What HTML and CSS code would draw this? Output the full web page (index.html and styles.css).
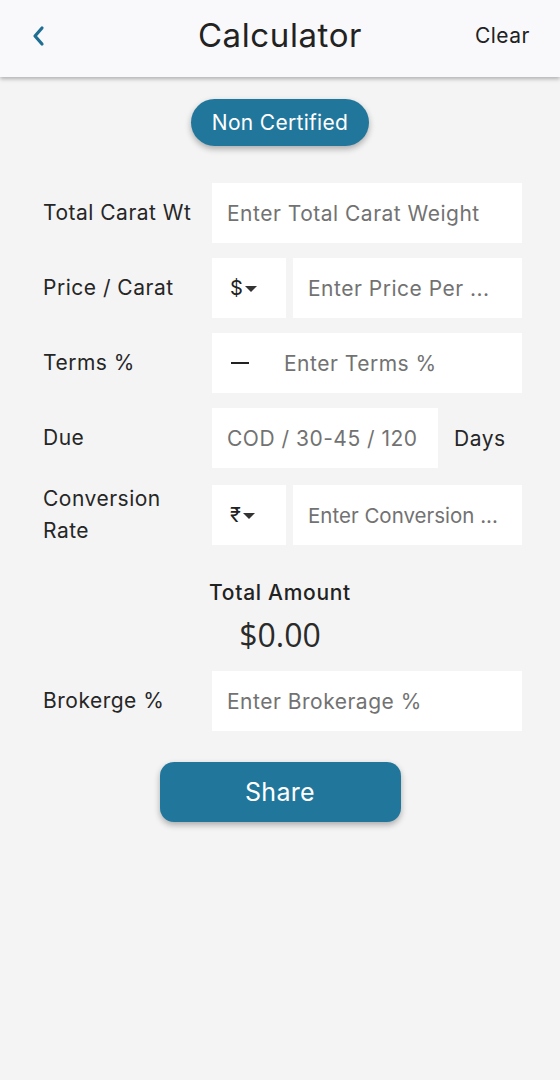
FILE: index.html
```html
<!DOCTYPE html>
<html lang="en">
<head>
<meta charset="utf-8">
<title>Calculator</title>
<link rel="stylesheet" href="styles.css">
</head>
<body>
<header class="appbar">
  <button class="back" aria-label="Back">
    <svg width="16" height="24" viewBox="0 0 16 24"><path d="M12 4 L5 12 L12 20" fill="none" stroke="#1f6f93" stroke-width="3.2" stroke-linecap="round" stroke-linejoin="round"/></svg>
  </button>
  <h1 class="title">Calculator</h1>
  <button class="clear">Clear</button>
</header>

<main class="content">
  <div class="pill-wrap"><button class="pill">Non Certified</button></div>

  <div class="form form-main">
    <div class="row">
      <label class="label">Total Carat Wt</label>
      <div class="field wide"><span class="ph">Enter Total Carat Weight</span></div>
    </div>

    <div class="row">
      <label class="label">Price / Carat</label>
      <div class="split">
        <div class="field select"><span class="cur">$</span><span class="caret"></span></div>
        <div class="field grow"><span class="ph">Enter Price Per ...</span></div>
      </div>
    </div>

    <div class="row">
      <label class="label">Terms %</label>
      <div class="field wide terms"><span class="minus"></span><span class="ph">Enter Terms %</span></div>
    </div>

    <div class="row">
      <label class="label">Due</label>
      <div class="split">
        <div class="field due"><span class="ph">COD / 30-45 / 120</span></div>
        <span class="days">Days</span>
      </div>
    </div>

    <div class="row conv">
      <label class="label two">Conversion<br>Rate</label>
      <div class="split">
        <div class="field select"><span class="cur">₹</span><span class="caret"></span></div>
        <div class="field grow"><span class="ph tight">Enter Conversion ...</span></div>
      </div>
    </div>
  </div>

  <div class="total">
    <div class="total-label">Total Amount</div>
    <div class="total-value">$0.00</div>
  </div>

  <div class="form">
    <div class="row">
      <label class="label">Brokerge %</label>
      <div class="field wide"><span class="ph">Enter Brokerage %</span></div>
    </div>
  </div>

  <div class="share-wrap"><button class="share">Share</button></div>
</main>
</body>
</html>
```

FILE: styles.css
```css
* { box-sizing: border-box; }
html, body { margin: 0; padding: 0; }
body {
  width: 560px;
  min-height: 1080px;
  background: #f4f4f4;
  font-family: "Inter", "Noto Sans", sans-serif;
  color: #262626;
}
button { font-family: inherit; border: 0; background: none; padding: 0; cursor: pointer; }

.appbar {
  height: 77px;
  background: #f9f9fb;
  box-shadow: 0 2px 4px rgba(0,0,0,0.28);
  display: grid;
  grid-template-columns: 1fr auto 1fr;
  align-items: center;
  padding: 0 30px 0 30px;
  position: relative;
}
.back { width: 20px; height: 30px; display: flex; align-items: center; margin-top: -6px; justify-self: start; }
.title {
  margin: -7px 0 0 0;
  font-size: 33px;
  font-weight: 400;
  color: #222;
  letter-spacing: 0.6px;
}
.clear { font-size: 21px; letter-spacing: 0.5px; color: #222; margin-top: -7px; justify-self: end; }

.content { padding-top: 22px; }
.pill-wrap { display: flex; justify-content: center; }
.pill {
  width: 178px; height: 47px;
  border-radius: 24px;
  background: #21769c;
  color: #fff;
  font-size: 21px;
  letter-spacing: 0.3px;
  box-shadow: 0 3px 6px rgba(0,0,0,0.3);
}

.form {
  padding: 0 38px 0 43px;
  display: flex;
  flex-direction: column;
  gap: 15px;
}
.form-main { margin-top: 37px; }
.row {
  display: grid;
  grid-template-columns: 169px 1fr;
  align-items: center;
  min-height: 60px;
}
.label { font-size: 21px; letter-spacing: 0.5px; color: #262626; line-height: 32px; }
.field {
  height: 60px;
  background: #fff;
  display: flex;
  align-items: center;
  padding: 0 15px;
  min-width: 0;
}
.ph { font-size: 21px; letter-spacing: 0.5px; color: #727272; white-space: nowrap; }
.ph.tight { letter-spacing: 0; font-size: 20.5px; }
.split { display: flex; align-items: center; gap: 7px; min-width: 0; }
.select { width: 74px; flex: none; padding: 0 0 0 18px; gap: 2px; }
.cur { font-size: 20px; color: #222; }
.caret {
  width: 0; height: 0;
  border-left: 6px solid transparent;
  border-right: 6px solid transparent;
  border-top: 6px solid #333;
  margin-top: 2px;
}
.grow { flex: 1; padding-right: 6px; }
.terms { padding-left: 19px; }
.minus { width: 18px; height: 2.5px; background: #222; margin-right: 35px; flex: none; }
.due { width: 226px; flex: none; }
.days { font-size: 21px; letter-spacing: 0.5px; color: #262626; margin-left: 9px; }

.total { display: flex; flex-direction: column; align-items: center; margin-top: 32px; margin-bottom: 16px; }
.total-label { font-size: 21px; line-height: 28px; letter-spacing: 0.7px; color: #222; font-weight: 500; }
.total-value { font-size: 32px; line-height: 40px; color: #2a2a2a; margin-top: 8px; font-family: "Open Sans", sans-serif; }

.share-wrap { display: flex; justify-content: center; margin-top: 31px; }
.share {
  width: 241px; height: 60px;
  border-radius: 14px;
  background: #21769c;
  color: #fff;
  font-size: 25px;
  letter-spacing: 0.3px;
  box-shadow: 0 3px 6px rgba(0,0,0,0.3);
}
```
